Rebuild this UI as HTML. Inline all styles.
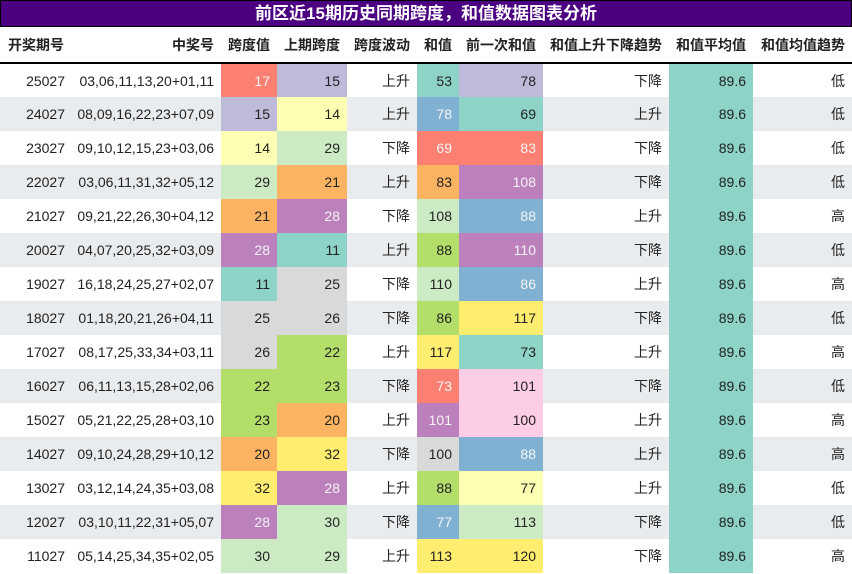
<!DOCTYPE html>
<html><head><meta charset="utf-8"><style>
*{margin:0;padding:0;box-sizing:border-box}
body{width:852px;height:574px;background:#fff;font-family:"Liberation Sans","Noto Sans CJK SC",sans-serif;font-size:14px;color:#222;overflow:hidden}
.title{height:27px;background:#4b0082;border:1px solid #000;color:#fff;font-weight:bold;font-size:17px;text-align:center;line-height:25px}
table{border-collapse:collapse;table-layout:fixed;width:852px}
td,th{height:34px;text-align:right;padding-right:7px;white-space:nowrap}
th{height:36px;font-weight:bold;border-bottom:2px solid #000}
th:first-child{text-align:left;padding-left:8px}
tr:nth-child(odd) td{background:#e9ecef}
tr td.w{color:#f4f4f4}
.a{background:#8dd3c7!important}.b{background:#ffffb3!important}.c{background:#bebada!important}.d{background:#fb8072!important}.e{background:#80b1d3!important}.f{background:#fdb462!important}.g{background:#b3de69!important}.h{background:#fccde5!important}.i{background:#d9d9d9!important}.j{background:#bc80bd!important}.k{background:#ccebc5!important}.l{background:#ffed6f!important}
</style></head><body>
<div class="title">前区近15期历史同期跨度，和值数据图表分析</div>
<table>
<colgroup><col style="width:72px"><col style="width:149px"><col style="width:56px"><col style="width:70px"><col style="width:70px"><col style="width:42px"><col style="width:84px"><col style="width:126px"><col style="width:84px"><col style="width:99px"></colgroup>
<tr><th>开奖期号</th><th>中奖号</th><th>跨度值</th><th>上期跨度</th><th>跨度波动</th><th>和值</th><th>前一次和值</th><th>和值上升下降趋势</th><th>和值平均值</th><th>和值均值趋势</th></tr>
<tr><td>25027</td><td>03,06,11,13,20+01,11</td><td class="d w">17</td><td class="c">15</td><td>上升</td><td class="a">53</td><td class="c">78</td><td>下降</td><td class="a">89.6</td><td>低</td></tr>
<tr><td>24027</td><td>08,09,16,22,23+07,09</td><td class="c">15</td><td class="b">14</td><td>上升</td><td class="e w">78</td><td class="a">69</td><td>上升</td><td class="a">89.6</td><td>低</td></tr>
<tr><td>23027</td><td>09,10,12,15,23+03,06</td><td class="b">14</td><td class="k">29</td><td>下降</td><td class="d w">69</td><td class="d w">83</td><td>下降</td><td class="a">89.6</td><td>低</td></tr>
<tr><td>22027</td><td>03,06,11,31,32+05,12</td><td class="k">29</td><td class="f">21</td><td>上升</td><td class="f">83</td><td class="j w">108</td><td>下降</td><td class="a">89.6</td><td>低</td></tr>
<tr><td>21027</td><td>09,21,22,26,30+04,12</td><td class="f">21</td><td class="j w">28</td><td>下降</td><td class="k">108</td><td class="e w">88</td><td>上升</td><td class="a">89.6</td><td>高</td></tr>
<tr><td>20027</td><td>04,07,20,25,32+03,09</td><td class="j w">28</td><td class="a">11</td><td>上升</td><td class="g">88</td><td class="j w">110</td><td>下降</td><td class="a">89.6</td><td>低</td></tr>
<tr><td>19027</td><td>16,18,24,25,27+02,07</td><td class="a">11</td><td class="i">25</td><td>下降</td><td class="k">110</td><td class="e w">86</td><td>上升</td><td class="a">89.6</td><td>高</td></tr>
<tr><td>18027</td><td>01,18,20,21,26+04,11</td><td class="i">25</td><td class="i">26</td><td>下降</td><td class="g">86</td><td class="l">117</td><td>下降</td><td class="a">89.6</td><td>低</td></tr>
<tr><td>17027</td><td>08,17,25,33,34+03,11</td><td class="i">26</td><td class="g">22</td><td>上升</td><td class="l">117</td><td class="a">73</td><td>上升</td><td class="a">89.6</td><td>高</td></tr>
<tr><td>16027</td><td>06,11,13,15,28+02,06</td><td class="g">22</td><td class="g">23</td><td>下降</td><td class="d w">73</td><td class="h">101</td><td>下降</td><td class="a">89.6</td><td>低</td></tr>
<tr><td>15027</td><td>05,21,22,25,28+03,10</td><td class="g">23</td><td class="f">20</td><td>上升</td><td class="j w">101</td><td class="h">100</td><td>上升</td><td class="a">89.6</td><td>高</td></tr>
<tr><td>14027</td><td>09,10,24,28,29+10,12</td><td class="f">20</td><td class="l">32</td><td>下降</td><td class="i">100</td><td class="e w">88</td><td>上升</td><td class="a">89.6</td><td>高</td></tr>
<tr><td>13027</td><td>03,12,14,24,35+03,08</td><td class="l">32</td><td class="j w">28</td><td>上升</td><td class="g">88</td><td class="b">77</td><td>上升</td><td class="a">89.6</td><td>低</td></tr>
<tr><td>12027</td><td>03,10,11,22,31+05,07</td><td class="j w">28</td><td class="k">30</td><td>下降</td><td class="e w">77</td><td class="k">113</td><td>下降</td><td class="a">89.6</td><td>低</td></tr>
<tr><td>11027</td><td>05,14,25,34,35+02,05</td><td class="k">30</td><td class="k">29</td><td>上升</td><td class="l">113</td><td class="l">120</td><td>下降</td><td class="a">89.6</td><td>高</td></tr>
</table>
</body></html>
